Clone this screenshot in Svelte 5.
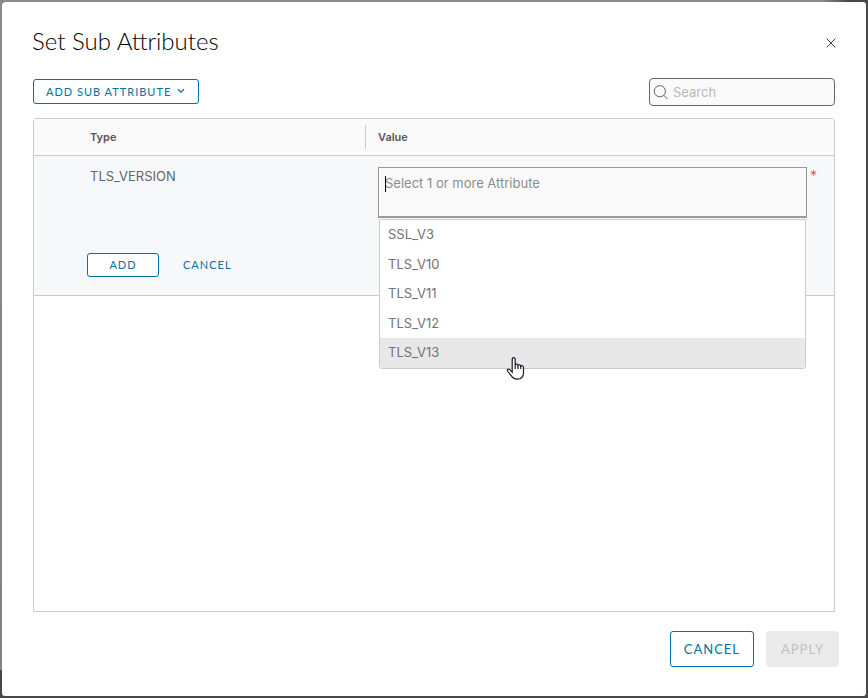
<script>
  const options = ['SSL_V3', 'TLS_V10', 'TLS_V11', 'TLS_V12', 'TLS_V13'];
  let active = $state('TLS_V13');
  let search = $state('');
  let value = $state('');
</script>

<div class="modal" role="dialog" aria-labelledby="dialog-title">
  <header>
    <h1 id="dialog-title">Set Sub Attributes</h1>
    <button class="close" aria-label="Close">
      <svg width="10" height="10" viewBox="0 0 10 10"><path d="M.6.6l8.8 8.8M9.4.6L.6 9.4" /></svg>
    </button>
  </header>

  <div class="toolbar">
    <button class="btn small menu">
      ADD SUB ATTRIBUTE
      <svg width="8" height="6" viewBox="0 0 8 6"><path d="M1 1.2l3 3 3-3" stroke-width="1.3" /></svg>
    </button>
    <label class="search">
      <svg width="16" height="16" viewBox="0 0 16 16"><circle cx="6.8" cy="7.2" r="5.6" /><path d="M10.8 11.2l3.8 3.8" /></svg>
      <input type="text" placeholder="Search" aria-label="Search" bind:value={search} />
    </label>
  </div>

  <div class="grid">
    <table>
      <thead>
        <tr>
          <th class="type">Type</th>
          <th><span class="divided">Value</span></th>
        </tr>
      </thead>
      <tbody>
        <tr>
          <td class="type">
            <div class="name">TLS_VERSION</div>
            <div class="actions">
              <button class="btn small add">ADD</button>
              <button class="btn small flat">CANCEL</button>
            </div>
          </td>
          <td class="value">
            <div class="field">
              <div class="combo">
                <textarea placeholder="Select 1 or more Attribute" aria-label="Value" bind:value></textarea>
                <span class="caret"></span>
                <ul role="listbox" aria-label="Attributes">
                  {#each options as option}
                    <li role="option" aria-selected={option === active} class:active={option === active} onmouseenter={() => (active = option)}>{option}</li>
                  {/each}
                </ul>
                <svg class="pointer" width="20" height="25" viewBox="0 0 20 25">
                  <path d="M6.2 14.5V3.2c0-2.2 3-2.2 3 0V9c.3-1.3 2.6-1.1 2.8.4.5-1 2.6-.8 2.8.7.6-.8 2.7-.5 2.7 1.2v5.2c0 4-2.4 6.7-6.3 6.7-3.2 0-4.8-1.3-6.2-3.8L1.5 15c-.8-1.5 1-2.7 2.3-1.4l2.4 2.6z" />
                  <path d="M9.2 8.5V13M12 9.4V13M14.8 10.1V13" />
                </svg>
              </div>
              <span class="required">*</span>
            </div>
          </td>
        </tr>
      </tbody>
    </table>
  </div>

  <footer>
    <button class="btn">CANCEL</button>
    <button class="btn" disabled>APPLY</button>
  </footer>
</div>

<style>
  :global(body) {
    background: linear-gradient(#8c8a8c, #838383) left top / 2px calc(100vh - 28px) no-repeat,
      linear-gradient(90deg, #8c8a8c 97%, #484848) left top / calc(100% - 20px) 2px no-repeat,
      #484848;
  }

  .modal {
    box-sizing: border-box;
    min-height: calc(100vh - 4px);
    margin: 2px;
    padding: 23px 31px 29px 31px;
    display: flex;
    flex-direction: column;
    background: #fff;
    border-radius: 3px;
    color: #666;
    font: 13px/20px Inter, sans-serif;
  }

  header {
    display: flex;
    justify-content: space-between;
    align-items: center;
    height: 35px;
    margin-left: -1px;
  }

  h1 {
    margin: 0;
    font: 300 24px/30px Lato, sans-serif;
    padding-bottom: 3px;
    color: #000;
  }

  button {
    font-family: Lato, sans-serif;
    cursor: pointer;
  }

  svg {
    fill: none;
    stroke: currentColor;
  }

  .close {
    display: flex;
    padding: 4px;
    margin-right: -5px;
    border: 0;
    background: none;
    color: #444;
  }

  .toolbar {
    display: flex;
    justify-content: space-between;
    align-items: flex-start;
    margin: 18px 0 12px;
  }

  .btn {
    box-sizing: border-box;
    height: 36px;
    padding: 0 13px;
    border: 1px solid #0072a3;
    border-radius: 3px;
    background: #fff;
    color: #0072a3;
    font-size: 13px;
    letter-spacing: 1px;
  }

  .btn.small {
    height: 24px;
    padding: 0 12px 1px;
    font-size: 11px;
  }

  .btn.menu {
    display: flex;
    align-items: center;
    gap: 6px;
    height: 25px;
    margin-top: 1px;
    padding-right: 13px;
  }

  .btn.add {
    width: 72px;
  }

  .btn.flat {
    border-color: transparent;
    background: none;
  }

  .btn:disabled {
    padding: 0 14px;
    border-color: #ebebeb;
    background: #ebebeb;
    color: #c1c1c1;
  }

  .search {
    box-sizing: border-box;
    display: flex;
    align-items: center;
    gap: 4px;
    width: 186px;
    height: 28px;
    padding: 0 4px 0 3px;
    border: 1px solid #666;
    border-radius: 4px;
    background: #fafafa;
  }

  .search svg {
    flex: none;
  }

  input,
  textarea {
    min-width: 0;
    border: 0;
    outline: 0;
    background: none;
    color: #666;
    font: 13px/20px Inter, sans-serif;
  }

  input {
    flex: 1;
    padding: 0;
  }

  input::placeholder {
    color: #b9b9b9;
  }

  .grid {
    flex: 1;
    border: 1px solid #ccc;
    border-radius: 3px 3px 0 0;
  }

  table {
    width: 100%;
    table-layout: fixed;
    border-collapse: separate;
    border-spacing: 0;
  }

  th {
    height: 36px;
    padding: 0;
    border-bottom: 1px solid #ccc;
    background: #fafafa;
    color: #565656;
    font: 600 11px/24px Inter, sans-serif;
    text-align: left;
  }

  .type {
    width: 331px;
    box-sizing: border-box;
    padding-left: 56px;
  }

  .divided {
    display: block;
    padding-left: 12px;
    border-left: 1px solid #ccc;
  }

  td {
    box-sizing: border-box;
    height: 140px;
    padding: 0;
    border-bottom: 1px solid #ccc;
    background: #f6f8fa;
    vertical-align: top;
  }

  td.type {
    padding: 10px 0 0 53px;
  }

  .name {
    padding-left: 3px;
    margin-bottom: 67px;
  }

  .actions {
    display: flex;
    gap: 11px;
  }

  td.value {
    padding: 11px 17px 0 13px;
  }

  .field {
    display: flex;
    gap: 3px;
  }

  .combo {
    position: relative;
    flex: 1;
  }

  textarea {
    box-sizing: border-box;
    display: block;
    width: 100%;
    height: 51px;
    padding: 5px 6px;
    border: 1px solid #999;
    border-bottom-width: 2px;
    background: #fafafa;
    resize: none;
  }

  textarea::placeholder {
    color: #8c8c8c;
  }

  .caret {
    position: absolute;
    left: 7px;
    top: 9px;
    width: 1px;
    height: 16px;
    background: #000;
  }

  ul {
    position: absolute;
    top: 52px;
    left: 1px;
    right: 1px;
    margin: 0;
    padding: 0;
    border: 1px solid #ccc;
    border-radius: 0 0 3px 3px;
    background: #fff;
    list-style: none;
  }

  li {
    padding: 4px 8px 6px;
    color: #737373;
  }

  li:nth-child(even) {
    padding-bottom: 5px;
  }

  li.active {
    background: #e8e8e8;
  }

  .pointer {
    position: absolute;
    left: 128px;
    top: 189px;
    fill: #fff;
    stroke: #1c1c2c;
    stroke-width: 1.2;
  }

  .required {
    color: #e0594c;
    font-size: 14px;
    line-height: 18px;
  }

  footer {
    display: flex;
    justify-content: flex-end;
    gap: 12px;
    margin: 19px -4px 0 0;
  }
</style>
